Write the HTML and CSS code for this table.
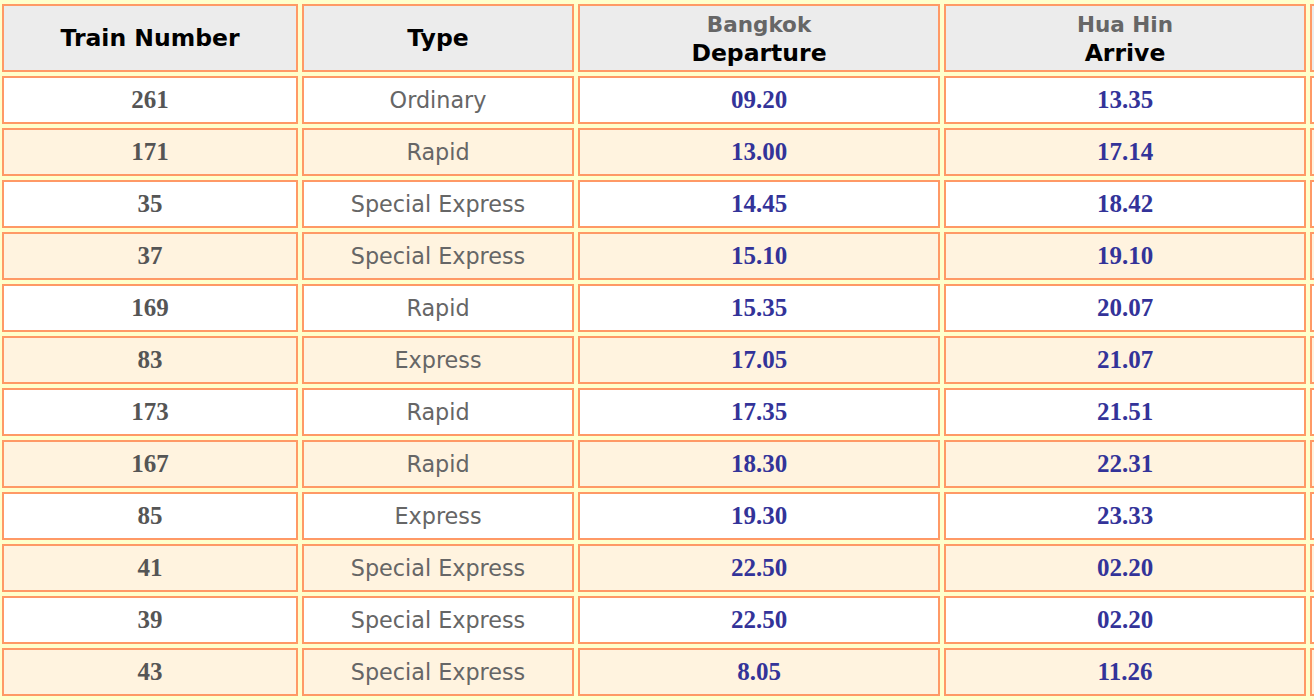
FILE: index.html
```html
<!DOCTYPE html>
<html lang="en">
<head>
<meta charset="utf-8">
<title>Bangkok to Hua Hin Train Timetable</title>
<link rel="stylesheet" href="styles.css">
</head>
<body>
<table class="timetable">
  <colgroup>
    <col class="c-num">
    <col class="c-type">
    <col class="c-time">
    <col class="c-time">
    <col class="c-time">
  </colgroup>
  <thead>
    <tr>
      <th>Train Number</th>
      <th>Type</th>
      <th><span class="city">Bangkok</span><br>Departure</th>
      <th><span class="city">Hua Hin</span><br>Arrive</th>
      <th></th>
    </tr>
  </thead>
  <tbody>
    <tr class="odd"><td class="num">261</td><td class="type">Ordinary</td><td class="time">09.20</td><td class="time">13.35</td><td></td></tr>
    <tr class="even"><td class="num">171</td><td class="type">Rapid</td><td class="time">13.00</td><td class="time">17.14</td><td></td></tr>
    <tr class="odd"><td class="num">35</td><td class="type">Special Express</td><td class="time">14.45</td><td class="time">18.42</td><td></td></tr>
    <tr class="even"><td class="num">37</td><td class="type">Special Express</td><td class="time">15.10</td><td class="time">19.10</td><td></td></tr>
    <tr class="odd"><td class="num">169</td><td class="type">Rapid</td><td class="time">15.35</td><td class="time">20.07</td><td></td></tr>
    <tr class="even"><td class="num">83</td><td class="type">Express</td><td class="time">17.05</td><td class="time">21.07</td><td></td></tr>
    <tr class="odd"><td class="num">173</td><td class="type">Rapid</td><td class="time">17.35</td><td class="time">21.51</td><td></td></tr>
    <tr class="even"><td class="num">167</td><td class="type">Rapid</td><td class="time">18.30</td><td class="time">22.31</td><td></td></tr>
    <tr class="odd"><td class="num">85</td><td class="type">Express</td><td class="time">19.30</td><td class="time">23.33</td><td></td></tr>
    <tr class="even"><td class="num">41</td><td class="type">Special Express</td><td class="time">22.50</td><td class="time">02.20</td><td></td></tr>
    <tr class="odd"><td class="num">39</td><td class="type">Special Express</td><td class="time">22.50</td><td class="time">02.20</td><td></td></tr>
    <tr class="even"><td class="num">43</td><td class="type">Special Express</td><td class="time">8.05</td><td class="time">11.26</td><td></td></tr>
  </tbody>
</table>
</body>
</html>
```
FILE: styles.css
```css
html, body {
  margin: 0;
  padding: 0;
  background: #ffffcc;
  overflow: hidden;
}

.timetable {
  border-collapse: separate;
  border-spacing: 4px;
  table-layout: fixed;
  width: 1678px;
  margin-left: -2px;
}

.c-num { width: 296px; }
.c-type { width: 272px; }
.c-time { width: 362px; }

.timetable th,
.timetable td {
  box-sizing: border-box;
  border: 2px solid #ff9966;
  padding: 0;
  text-align: center;
  vertical-align: middle;
}

.timetable th {
  height: 68px;
  background: #ececec;
  color: #000;
  font-family: "DejaVu Sans", Verdana, sans-serif;
  font-weight: bold;
  font-size: 23.5px;
  line-height: 28px;
}

.city {
  color: #666666;
  font-size: 21.5px;
}

.timetable td {
  height: 48px;
}

.odd td { background: #ffffff; }
.even td { background: #fff3df; }

.num {
  font-family: "Liberation Serif", "Times New Roman", serif;
  font-weight: bold;
  font-size: 25px;
  color: #555555;
}

.type {
  padding-top: 2px;
  font-family: "DejaVu Sans", Verdana, sans-serif;
  font-size: 22.3px;
  color: #666666;
}

.time {
  font-family: "Liberation Serif", "Times New Roman", serif;
  font-weight: bold;
  font-size: 25px;
  color: #333399;
}
```
